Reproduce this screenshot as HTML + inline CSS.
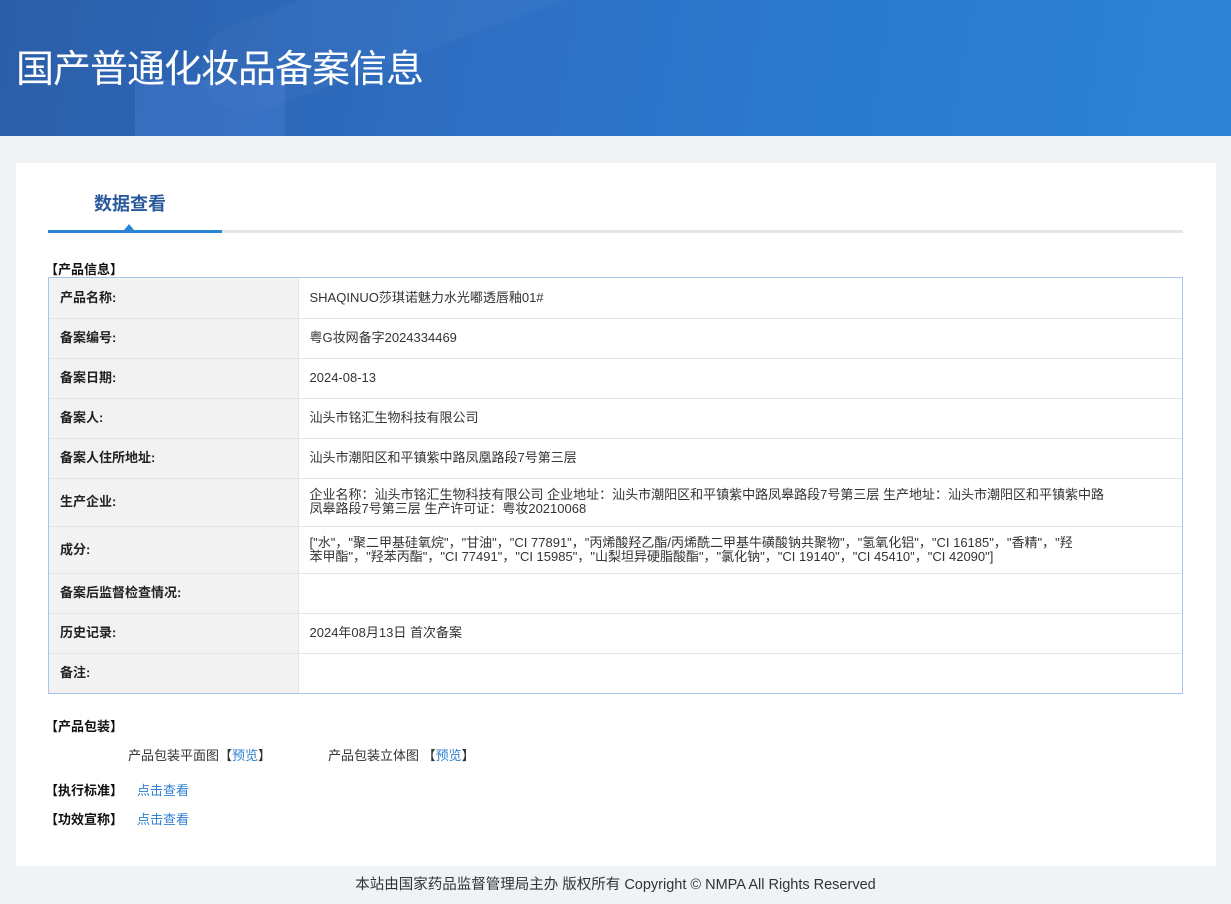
<!DOCTYPE html>
<html><head><meta charset="utf-8"><style>
*{margin:0;padding:0;box-sizing:border-box}
body{width:1231px;height:904px;background:#eff3f6;font-family:"Liberation Sans","Noto Sans CJK SC",sans-serif;font-size:13px;color:#333;position:relative;overflow:hidden}
.hd{position:absolute;left:0;top:0;width:1231px;height:136px;background:linear-gradient(100deg,#2b5ea8 0%,#2e6fc4 40%,#2a7bd0 70%,#2d84d6 100%);overflow:hidden}
.hd .b1{position:absolute;left:190px;top:-40px;width:460px;height:90px;border-radius:45px;background:rgba(255,255,255,.03);transform:rotate(-20deg)}
.hd .b2{position:absolute;left:135px;top:80px;width:150px;height:60px;background:rgba(90,140,230,.25)}
.hd h1{position:absolute;left:16px;top:38px;color:#fff;font-size:38px;font-weight:normal;letter-spacing:-1px}
.card{position:absolute;left:16px;top:163px;width:1200px;height:703px;background:#fff}
.tab{position:absolute;left:94px;top:190px;font-size:18px;font-weight:bold;color:#2a5a9c}
.ul{position:absolute;left:48px;top:230px;width:1135px;height:3px;background:#e6e6e6}
.ul i{position:absolute;left:0;top:0;width:174px;height:3px;background:#2a85d6}
.tri{position:absolute;left:124px;top:224px;border-left:5px solid transparent;border-right:5px solid transparent;border-bottom:6px solid #2a85d6}
.sec{position:absolute;font-weight:bold;color:#111}
.tw{position:absolute;left:48px;top:277px;width:1135px;border:1px solid #a9c5ea}
table{width:100%;border-collapse:collapse}
td{border-top:1px solid #e4e4e4;padding:0 11px;vertical-align:middle;line-height:14px}
tr:first-child td{border-top:none}
td.l{width:249px;background:#f2f2f2;font-weight:bold;color:#222;border-right:1px solid #e4e4e4}
.lk{color:#2f7fd0}
.ft{position:absolute;top:873px;left:0;width:1231px;text-align:center;font-size:14.5px;color:#333}
</style></head><body>
<div class="hd"><div class="b1"></div><div class="b2"></div><h1>国产普通化妆品备案信息</h1></div>
<div class="card"></div>
<div class="tab">数据查看</div>
<div class="ul"><i></i></div><div class="tri"></div>
<div class="sec" style="left:45px;top:259px">【产品信息】</div>
<div class="tw"><table>
<tr style="height:40px"><td class="l">产品名称:</td><td>SHAQINUO莎琪诺魅力水光嘟透唇釉01#</td></tr>
<tr style="height:40px"><td class="l">备案编号:</td><td>粤G妆网备字2024334469</td></tr>
<tr style="height:40px"><td class="l">备案日期:</td><td>2024-08-13</td></tr>
<tr style="height:40px"><td class="l">备案人:</td><td>汕头市铭汇生物科技有限公司</td></tr>
<tr style="height:40px"><td class="l">备案人住所地址:</td><td>汕头市潮阳区和平镇紫中路凤凰路段7号第三层</td></tr>
<tr style="height:48px"><td class="l">生产企业:</td><td>企业名称：汕头市铭汇生物科技有限公司 企业地址：汕头市潮阳区和平镇紫中路凤皋路段7号第三层 生产地址：汕头市潮阳区和平镇紫中路<br>凤皋路段7号第三层 生产许可证：粤妆20210068</td></tr>
<tr style="height:47px"><td class="l">成分:</td><td>["水"，"聚二甲基硅氧烷"，"甘油"，"CI 77891"，"丙烯酸羟乙酯/丙烯酰二甲基牛磺酸钠共聚物"，"氢氧化铝"，"CI 16185"，"香精"，"羟<br>苯甲酯"，"羟苯丙酯"，"CI 77491"，"CI 15985"，"山梨坦异硬脂酸酯"，"氯化钠"，"CI 19140"，"CI 45410"，"CI 42090"]</td></tr>
<tr style="height:40px"><td class="l">备案后监督检查情况:</td><td></td></tr>
<tr style="height:40px"><td class="l">历史记录:</td><td>2024年08月13日 首次备案</td></tr>
<tr style="height:40px"><td class="l">备注:</td><td></td></tr>
</table></div>
<div class="sec" style="left:45px;top:716px">【产品包装】</div>
<div style="position:absolute;left:128px;top:745px">产品包装平面图【<span class="lk">预览</span>】</div>
<div style="position:absolute;left:328px;top:745px">产品包装立体图 【<span class="lk">预览</span>】</div>
<div style="position:absolute;left:45px;top:780px"><b style="color:#111">【执行标准】</b><span class="lk" style="margin-left:14px">点击查看</span></div>
<div style="position:absolute;left:45px;top:809px"><b style="color:#111">【功效宣称】</b><span class="lk" style="margin-left:14px">点击查看</span></div>
<div class="ft">本站由国家药品监督管理局主办 版权所有 Copyright © NMPA All Rights Reserved</div>
</body></html>
